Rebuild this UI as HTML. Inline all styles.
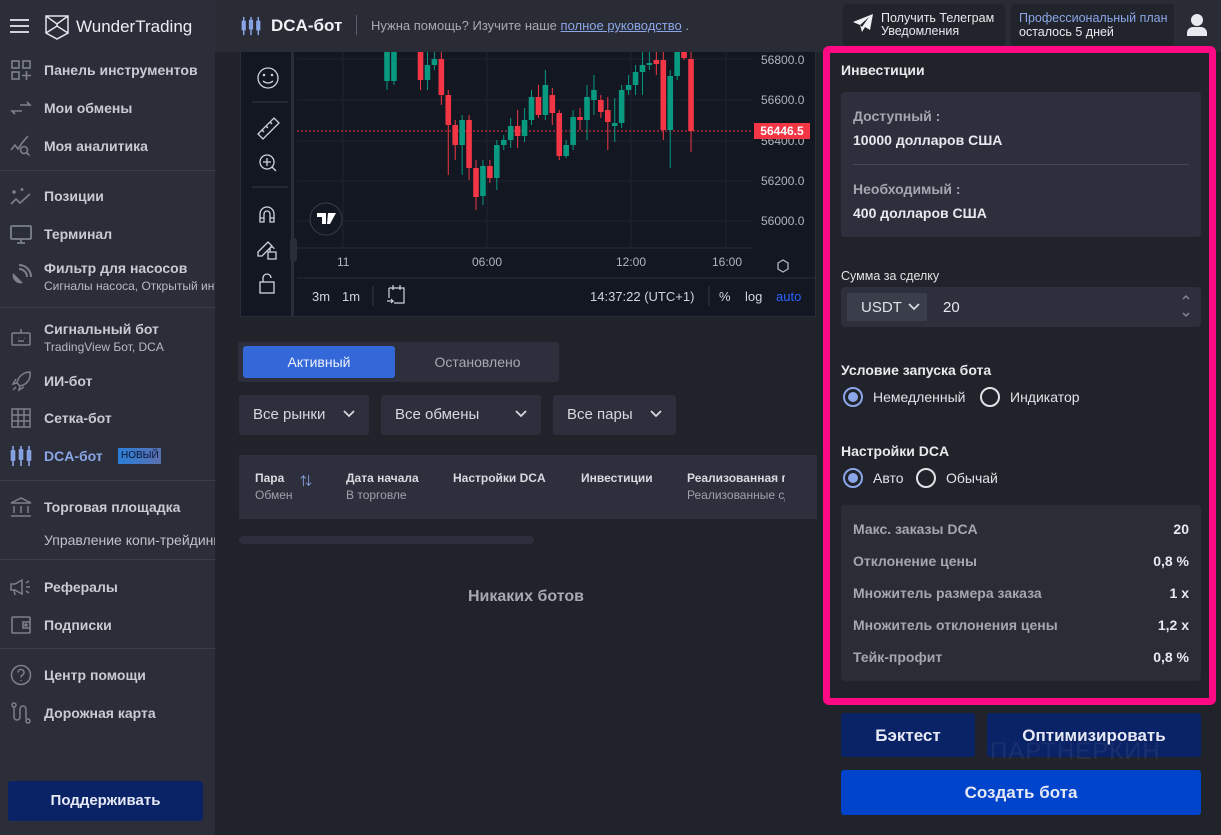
<!DOCTYPE html>
<html><head><meta charset="utf-8">
<style>
*{margin:0;padding:0;box-sizing:border-box}
body{width:1221px;height:835px;overflow:hidden;background:#21232a;font-family:"Liberation Sans","Noto Sans CJK SC",sans-serif;color:#d6d8de;position:relative}
.a{position:absolute}
#side{left:0;top:0;width:215px;height:835px;background:#2b2d38}
.it{position:absolute;left:44px;font-size:14px;font-weight:bold;color:#c9cbd2;white-space:nowrap}
.sub{position:absolute;left:44px;font-size:12px;color:#b8bac2;white-space:nowrap;width:171px;overflow:hidden}
.ic{position:absolute;left:10px;width:22px;height:22px}
.div{position:absolute;left:0;width:215px;height:1px;background:#3a3c48}
#hdr{left:215px;top:0;width:1006px;height:52px;background:#2a2c35}
.card{background:#2d303c;border-radius:4px}
.lbl{font-size:14px;font-weight:bold;color:#a4a7b0}
.val{font-size:14px;font-weight:bold;color:#e8e9ee}
.btn{position:absolute;border-radius:3px;color:#e6e9f5;font-weight:bold;font-size:17px;text-align:center}
.dd{position:absolute;top:395px;height:40px;background:#2d303c;border-radius:3px;font-size:15px;color:#d6d8de;padding:11px 0 0 14px}
.th{position:absolute;top:471px;font-size:12px;font-weight:bold;color:#d8dae0}
.ts{position:absolute;top:488px;font-size:12px;color:#9ea1aa}
.row{position:absolute;left:853px;width:336px;font-size:14px;font-weight:bold;color:#a4a7b0}
.row span{float:right;color:#e8e9ee}
.rad{position:absolute;width:20px;height:20px;border-radius:50%;border:2px solid #e0e2e8}
.rad.on{border-color:#8aa6e8}
.rad.on::after{content:"";position:absolute;left:3px;top:3px;width:10px;height:10px;border-radius:50%;background:#8aa6e8}
</style></head><body>

<div id="side" class="a">
 <div class="a" style="left:10px;top:19px;width:19px;height:2px;background:#d0d2d8;box-shadow:0 6px 0 #d0d2d8,0 12px 0 #d0d2d8"></div>
 <svg class="a" style="left:43px;top:13px" width="28" height="28" viewBox="0 0 28 28" fill="none" stroke="#e4e5ea" stroke-width="1.5"><path d="M3 3h22v17l-11 6-11-6z"/><path d="M3 3l11 8 11-8M3 20l11-7 11 7M14 11v2"/></svg>
 <div class="a" style="left:76px;top:17px;font-size:17px;color:#eceef2">WunderTrading</div>

 <svg class="ic" style="top:59px" viewBox="0 0 22 22" fill="none" stroke="#7d808a" stroke-width="1.6"><rect x="2" y="2" width="7" height="7"/><rect x="13" y="2" width="7" height="7"/><rect x="2" y="13" width="7" height="7"/><path d="M16.5 12v9M12 16.5h9"/></svg>
 <div class="it" style="top:62px">Панель инструментов</div>
 <svg class="ic" style="top:97px" viewBox="0 0 22 22" fill="none" stroke="#7d808a" stroke-width="1.6"><path d="M10 8h10l-3-3M12 14H2l3 3"/></svg>
 <div class="it" style="top:100px">Мои обмены</div>
 <svg class="ic" style="top:135px" viewBox="0 0 22 22" fill="none" stroke="#7d808a" stroke-width="1.6"><path d="M1 15l4-5 3 4 4-6 6-7"/><circle cx="14" cy="15" r="3.5"/><path d="M16.5 17.5l3 3"/></svg>
 <div class="it" style="top:138px">Моя аналитика</div>
 <div class="div" style="top:170px"></div>
 <svg class="ic" style="top:185px" viewBox="0 0 22 22" fill="none" stroke="#7d808a" stroke-width="1.6"><path d="M1 19l5-5 4 4 10-9M4 5v4M2 7h4M12 3v3M10.5 4.5h3"/></svg>
 <div class="it" style="top:188px">Позиции</div>
 <svg class="ic" style="top:223px" viewBox="0 0 22 22" fill="none" stroke="#7d808a" stroke-width="1.8"><rect x="1" y="3" width="20" height="13" rx="1"/><path d="M11 16v3M7 20h8"/></svg>
 <div class="it" style="top:226px">Терминал</div>
 <svg class="ic" style="top:264px" viewBox="0 0 22 22" fill="#7d808a"><path d="M3 9a8 8 0 0 0 10 10z"/><path d="M9 5a8 8 0 0 1 8 8" stroke="#7d808a" stroke-width="2" fill="none"/><path d="M9 1a12 12 0 0 1 12 12" stroke="#7d808a" stroke-width="2" fill="none"/></svg>
 <div class="it" style="top:260px">Фильтр для насосов</div>
 <div class="sub" style="top:279px">Сигналы насоса, Открытый интерес</div>
 <div class="div" style="top:307px"></div>
 <svg class="ic" style="top:326px" viewBox="0 0 22 22" fill="none" stroke="#7d808a" stroke-width="1.5"><rect x="2" y="7" width="18" height="12" rx="1"/><path d="M8 12h.5M14 12h.5M8 15h6M11 7V3"/></svg>
 <div class="it" style="top:321px">Сигнальный бот</div>
 <div class="sub" style="top:340px">TradingView Бот, DCA</div>
 <svg class="ic" style="top:370px" viewBox="0 0 22 22" fill="none" stroke="#7d808a" stroke-width="1.5"><path d="M20 2c-7 0-12 5-13 11l3 3c6-1 11-6 10-14zM7 13l-4 1 3-5M10 16l-1 4 5-3M3 20l3-3"/></svg>
 <div class="it" style="top:373px">ИИ-бот</div>
 <svg class="ic" style="top:407px" viewBox="0 0 22 22" fill="none" stroke="#7d808a" stroke-width="1.5"><rect x="2" y="2" width="18" height="18"/><path d="M8 2v18M14 2v18M2 8h18M2 14h18"/></svg>
 <div class="it" style="top:410px">Сетка-бот</div>
 <svg class="ic" style="top:445px" viewBox="0 0 22 22" fill="none" stroke="#8aa6e8" stroke-width="1.6"><path d="M3 1v20M11 1v20M19 1v20"/><rect x="1.5" y="6" width="3" height="9"/><rect x="9.5" y="5" width="3" height="9"/><rect x="17.5" y="6" width="3" height="9"/></svg>
 <div class="it" style="top:448px;color:#8aa6e8">DCA-бот</div>
 <div class="a" style="left:118px;top:448px;width:43px;height:16px;background:linear-gradient(90deg,#2a7fd6,#5b6fb0);font-size:10px;color:#0b1430;padding:2px 0 0 3px">НОВЫЙ</div>
 <div class="div" style="top:480px"></div>
 <svg class="ic" style="top:496px" viewBox="0 0 22 22" fill="none" stroke="#7d808a" stroke-width="1.5"><path d="M1 7l10-5 10 5zM4 10v7M11 10v7M18 10v7M1 20h20"/></svg>
 <div class="it" style="top:499px">Торговая площадка</div>
 <div class="sub" style="top:532px;font-size:14px;color:#c0c2ca">Управление копи-трейдингом</div>
 <div class="div" style="top:559px"></div>
 <svg class="ic" style="top:576px" viewBox="0 0 22 22" fill="none" stroke="#7d808a" stroke-width="1.5"><path d="M1 8h4l7-4v14l-7-4H1zM4 14l1 5M16 7l3-2M16 11h4M16 15l3 2"/></svg>
 <div class="it" style="top:579px">Рефералы</div>
 <svg class="ic" style="top:614px" viewBox="0 0 22 22" fill="none" stroke="#7d808a" stroke-width="1.6"><rect x="2" y="3" width="18" height="16" rx="1"/><path d="M20 8h-7v6h7"/><circle cx="16" cy="11" r="1"/></svg>
 <div class="it" style="top:617px">Подписки</div>
 <div class="div" style="top:648px"></div>
 <svg class="ic" style="top:664px" viewBox="0 0 22 22" fill="none" stroke="#7d808a" stroke-width="1.5"><circle cx="11" cy="11" r="9.5"/><path d="M8 8.5a3 3 0 1 1 4 2.8c-1 .5-1 1-1 2.2M11 16v1"/></svg>
 <div class="it" style="top:667px">Центр помощи</div>
 <svg class="ic" style="top:702px" viewBox="0 0 22 22" fill="none" stroke="#7d808a" stroke-width="1.5"><circle cx="4" cy="3" r="2"/><circle cx="18" cy="19" r="2"/><path d="M4 5v10a3 3 0 0 0 6 0V7a3 3 0 0 1 6 0v10"/></svg>
 <div class="it" style="top:705px">Дорожная карта</div>
 <div class="btn" style="left:8px;top:781px;width:195px;height:40px;background:#0a2366;font-size:15px;padding-top:11px">Поддерживать</div>
</div>

<div id="hdr" class="a">
 <svg class="a" style="left:26px;top:16px" width="20" height="20" viewBox="0 0 22 22" fill="none" stroke="#8aa6e8" stroke-width="1.6"><path d="M3 1v20M11 1v20M19 1v20"/><rect x="1.5" y="6" width="3" height="9"/><rect x="9.5" y="5" width="3" height="9"/><rect x="17.5" y="6" width="3" height="9"/></svg>
 <div class="a" style="left:56px;top:16px;font-size:17px;font-weight:bold;color:#f0f1f5">DCA-бот</div>
 <div class="a" style="left:141px;top:15px;width:1px;height:20px;background:#5a5d6a"></div>
 <div class="a" style="left:156px;top:18px;font-size:13px;color:#a6a9b2">Нужна помощь? Изучите наше <span style="color:#8aa6e8;text-decoration:underline">полное руководство</span> .</div>
 <div class="a card" style="left:628px;top:4px;width:162px;height:42px;background:#22242c"></div>
 <svg class="a" style="left:637px;top:13px" width="22" height="20" viewBox="0 0 22 20"><path d="M21 1L1 9l7 3 2 7 3-5 5 3z" fill="#f0f1f5"/><path d="M8 12l9-8-7 10" fill="#22242c"/></svg>
 <div class="a" style="left:666px;top:12px;font-size:12.5px;color:#e8e9ee;line-height:13px">Получить Телеграм<br>Уведомления</div>
 <div class="a card" style="left:796px;top:4px;width:163px;height:42px;background:#22242c"></div>
 <div class="a" style="left:804px;top:11px;font-size:12.5px;color:#e8e9ee;line-height:14px"><span style="color:#8aa6e8">Профессиональный план</span><br>осталось 5 дней</div>
 <svg class="a" style="left:971px;top:13px" width="22" height="24" viewBox="0 0 22 24" fill="#e8e9ee"><circle cx="11" cy="7" r="6"/><path d="M1 23v-3a6 6 0 0 1 6-6h8a6 6 0 0 1 6 6v3z"/></svg>
</div>

<!-- chart -->
<div class="a" style="left:240px;top:52px;width:576px;height:265px;background:#131722;border:1px solid #2a2e39;border-top:none"></div>
<div class="a" style="left:241px;top:52px;width:53px;height:264px;background:#131722;border-right:3px solid #2a2e39"></div>
<svg class="a" style="left:240px;top:52px" width="576" height="265" id="ch">
 <g fill="none" stroke="#d1d4dc" stroke-width="1.3">
  <circle cx="28" cy="26" r="10"/><circle cx="24" cy="23" r=".6"/><circle cx="32" cy="23" r=".6"/><path d="M23 29q5 4 10 0"/>
  <path d="M18 82l16-16 5 5-16 16z M22 78l2 2M26 74l2 2M30 70l2 2"/>
  <circle cx="27" cy="110" r="7"/><path d="M32 115l4 4M27 106v8M23 110h8"/>
  <path d="M20 170v-8a7 7 0 0 1 14 0v8h-4v-8a3 3 0 0 0-6 0v8zM20 166h4M30 166h4"/>
  <path d="M18 200l10-10 4 4-10 10h-4zM28 200h8v7h-8zM30 200v-3a2 2 0 0 1 4 0"/>
  <rect x="20" y="230" width="14" height="11"/><path d="M23 230v-4a4 4 0 0 1 8 0"/>
 </g>
 <path d="M12 50h36M12 135h36" stroke="#363a45"/>
 <rect x="50" y="186" width="7" height="24" rx="3" fill="#2a2e39"/>
 <g stroke="#1f2330"><path d="M103 0v195M247 0v195M391 0v195M486 0v195M57 7h456M57 48h456M57 89h456M57 129h456M57 169h456"/></g>
 <path d="M57 196h456M57 226h519" stroke="#2a2e39"/>
 <path d="M57 79h456" stroke="#f23645" stroke-dasharray="2 2" stroke-width="1"/>
 <g id="cd"></g>
 <circle cx="86" cy="167" r="16" fill="#131722" stroke="#3a3e4a"/>
 <path d="M77 161h9v11h-4v-7h-5zM88 161h8l-6 11h-3z" fill="#fff"/>
 <g fill="#b2b5be" font-size="12" font-family="Liberation Sans">
  <text x="521" y="12">56800.0</text><text x="521" y="52">56600.0</text><text x="521" y="93">56400.0</text><text x="521" y="133">56200.0</text><text x="521" y="173">56000.0</text>
  <text x="97" y="214">11</text><text x="232" y="214">06:00</text><text x="376" y="214">12:00</text><text x="472" y="214">16:00</text>
 </g>
 <rect x="514" y="71" width="56" height="16" fill="#f23645"/>
 <text x="542" y="83" fill="#fff" font-size="12" font-weight="bold" text-anchor="middle" font-family="Liberation Sans">56446.5</text>
 <path d="M538 211l5-3 5 3v6l-5 3-5-3z" fill="none" stroke="#b2b5be" stroke-width="1.3"/>
 <g fill="#d1d4dc" font-size="13" font-family="Liberation Sans">
  <text x="72" y="249">3m</text><text x="102" y="249">1m</text>
  <text x="350" y="249">14:37:22 (UTC+1)</text><text x="479" y="249">%</text><text x="505" y="249">log</text>
  <text x="536" y="249" fill="#2962ff">auto</text>
 </g>
 <path d="M133 234v20M469 234v20" stroke="#363a45"/>
 <path d="M149 236h15v15h-10M149 236v10M153 233v5M160 233v5M147 249h6l-2-2M153 249l-2 2" fill="none" stroke="#d1d4dc" stroke-width="1.2"/>
</svg>

<!-- tabs -->
<div class="a" style="left:238px;top:342px;width:321px;height:40px;background:#2d303c;border-radius:3px"></div>
<div class="a" style="left:243px;top:346px;width:152px;height:32px;background:#3468d8;border-radius:3px;color:#eef1fb;font-size:14px;text-align:center;padding-top:8px">Активный</div>
<div class="a" style="left:400px;top:354px;width:155px;color:#a6a9b2;font-size:14px;text-align:center">Остановлено</div>

<div class="dd" style="left:239px;width:130px">Все рынки</div>
<div class="dd" style="left:381px;width:160px">Все обмены</div>
<div class="dd" style="left:553px;width:123px">Все пары</div>
<svg class="a" style="left:0;top:0" width="700" height="440" fill="none" stroke="#d6d8de" stroke-width="1.8"><path d="M344 411l5 5 5-5M516 411l5 5 5-5M651 411l5 5 5-5"/></svg>

<div class="a" style="left:239px;top:455px;width:578px;height:64px;background:#2d303c"></div>
<div class="th" style="left:255px">Пара</div><div class="ts" style="left:255px">Обмен</div>
<div class="a" style="left:300px;top:472px;font-size:12px;color:#8aa6e8">⇅</div>
<div class="th" style="left:346px">Дата начала</div><div class="ts" style="left:346px">В торговле</div>
<div class="th" style="left:453px">Настройки DCA</div>
<div class="th" style="left:581px">Инвестиции</div>
<div class="th" style="left:687px;width:98px;overflow:hidden;white-space:nowrap">Реализованная прибыль</div>
<div class="ts" style="left:687px;width:98px;overflow:hidden;white-space:nowrap">Реализованные сделки</div>
<div class="a" style="left:239px;top:536px;width:295px;height:8px;background:#2d303c;border-radius:4px"></div>
<div class="a" style="left:468px;top:588px;font-size:16px;font-weight:bold;color:#a6a9b2">Никаких ботов</div>

<!-- right panel -->
<div class="a" style="left:823px;top:46px;width:393px;height:659px;border:7px solid #ff0a84;border-radius:6px;background:#21232a"></div>
<div class="a" style="left:841px;top:62px;font-size:14px;font-weight:bold;color:#e8e9ee">Инвестиции</div>
<div class="a card" style="left:841px;top:92px;width:360px;height:145px"></div>
<div class="a lbl" style="left:853px;top:108px">Доступный :</div>
<div class="a val" style="left:853px;top:132px">10000 долларов США</div>
<div class="a" style="left:853px;top:164px;width:336px;height:1px;background:#454856"></div>
<div class="a lbl" style="left:853px;top:181px">Необходимый :</div>
<div class="a val" style="left:853px;top:205px">400 долларов США</div>

<div class="a" style="left:841px;top:269px;font-size:12.5px;color:#e0e2e8">Сумма за сделку</div>
<div class="a card" style="left:841px;top:287px;width:360px;height:40px"></div>
<div class="a" style="left:847px;top:293px;width:80px;height:28px;background:#3a3d4a;border-radius:2px;font-size:15px;color:#e0e2e8;padding:6px 0 0 14px">USDT</div>
<svg class="a" style="left:0;top:0" width="1221" height="330" fill="none" stroke="#d6d8de" stroke-width="1.8"><path d="M909 304l5 5 5-5"/><path d="M1183 299l3-3 3 3M1183 313l3 3 3-3" stroke="#8a8d98" stroke-width="1.3"/></svg>
<div class="a" style="left:943px;top:299px;font-size:15px;color:#e8e9ee">20</div>

<div class="a" style="left:841px;top:362px;font-size:14px;font-weight:bold;color:#e8e9ee">Условие запуска бота</div>
<div class="rad on" style="left:843px;top:387px"></div>
<div class="a" style="left:873px;top:389px;font-size:14px;color:#e0e2e8">Немедленный</div>
<div class="rad" style="left:980px;top:387px"></div>
<div class="a" style="left:1010px;top:389px;font-size:14px;color:#e0e2e8">Индикатор</div>

<div class="a" style="left:841px;top:443px;font-size:14px;font-weight:bold;color:#e8e9ee">Настройки DCA</div>
<div class="rad on" style="left:843px;top:468px"></div>
<div class="a" style="left:873px;top:470px;font-size:14px;color:#e0e2e8">Авто</div>
<div class="rad" style="left:916px;top:468px"></div>
<div class="a" style="left:946px;top:470px;font-size:14px;color:#e0e2e8">Обычай</div>

<div class="a" style="left:841px;top:505px;width:360px;height:176px;background:#2a2c36;border-radius:4px"></div>
<div class="row" style="top:521px">Макс. заказы DCA<span>20</span></div>
<div class="row" style="top:553px">Отклонение цены<span>0,8 %</span></div>
<div class="row" style="top:585px">Множитель размера заказа<span>1 x</span></div>
<div class="row" style="top:617px">Множитель отклонения цены<span>1,2 x</span></div>
<div class="row" style="top:649px">Тейк-профит<span>0,8 %</span></div>

<div class="btn" style="left:841px;top:713px;width:134px;height:44px;background:#0a2366;padding-top:13px">Бэктест</div>
<div class="btn" style="left:987px;top:713px;width:214px;height:44px;background:#0a2366;padding-top:13px">Оптимизировать</div>
<div class="a" style="left:990px;top:738px;font-size:24px;color:rgba(120,130,160,.15);letter-spacing:1px">ПАРТНЕРКИН</div>
<div class="btn" style="left:841px;top:770px;width:360px;height:45px;background:#0044cc;padding-top:13px">Создать бота</div>

<script>
var c=[[147,0,29,0,38,1],[153,0,29,0,33,1],[176,0,28,0,38,0],[182,13,28,0,38,1],[188,7,13,0,18,1],[194,7,43,0,53,0],[200,43,73,38,123,0],[206,73,93,68,108,0],[212,68,93,63,123,1],[218,68,116,63,128,0],[224,116,145,108,158,0],[230,114,144,108,153,1],[236,114,126,108,131,0],[242,93,126,88,138,1],[248,88,93,83,98,1],[254,74,88,66,96,1],[260,74,84,58,96,0],[266,68,84,56,90,1],[272,45,68,38,73,1],[278,45,63,33,66,0],[284,33,63,18,68,1],[290,43,61,36,73,0],[296,61,104,58,108,0],[302,93,104,88,106,1],[308,65,93,58,98,1],[314,65,68,56,78,0],[320,45,68,33,88,1],[326,38,48,23,63,1],[332,48,60,43,66,0],[338,58,70,45,98,0],[344,71,74,46,90,1],[350,38,71,33,76,1],[356,33,38,23,43,1],[362,20,33,13,43,1],[368,13,20,0,43,1],[374,11,13,0,18,1],[380,8,12,0,23,0],[386,8,78,0,88,0],[392,24,78,18,116,1],[398,0,24,0,28,1],[404,0,6,0,8,0],[410,7,79,0,100,0]];
var g=document.getElementById('cd'),s='';
c.forEach(function(k){var x=147+(k[0]-147)*1.156;var col=k[5]?'#089981':'#f23645';s+='<line x1="'+x+'" x2="'+x+'" y1="'+k[3]+'" y2="'+k[4]+'" stroke="'+col+'"/><rect x="'+(x-2.8)+'" y="'+k[1]+'" width="5.6" height="'+Math.max(1,k[2]-k[1])+'" fill="'+col+'"/>';});
g.innerHTML=s;
</script>
</body></html>
